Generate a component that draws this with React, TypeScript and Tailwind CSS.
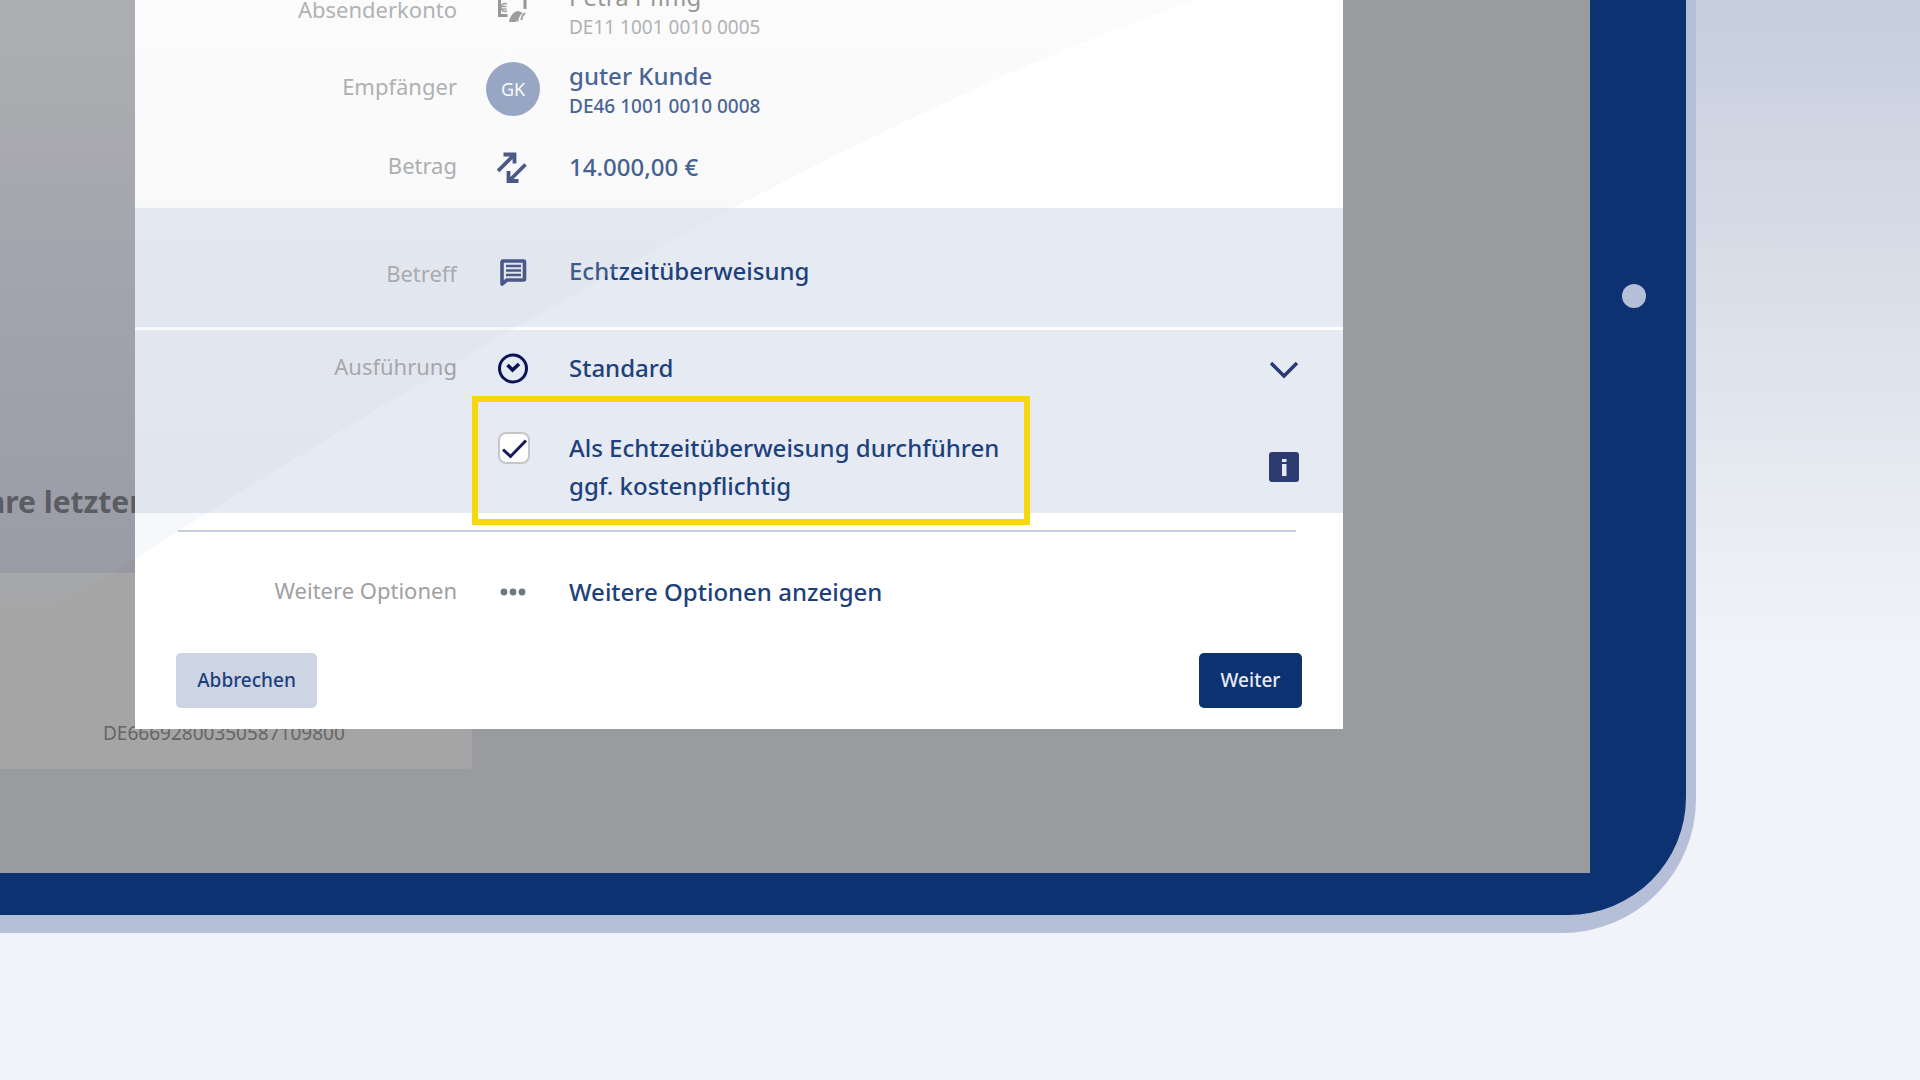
import React from "react";

const value = "text-2xl leading-8 font-medium text-[#1d417a]";

type RowProps = {
  name: string;
  htmlFor?: string;
  labelClass?: string;
  className?: string;
  icon: React.ReactNode;
  children: React.ReactNode;
  tail?: React.ReactNode;
};

function Row({ name, htmlFor, labelClass = "-mt-0.5 mb-0.5", className = "", icon, children, tail }: RowProps) {
  const text = `w-[294px] shrink-0 text-right text-[22px] leading-8 text-[#a0a0a2] ${labelClass}`;
  return (
    <div className={`flex items-center ${className}`}>
      {htmlFor ? (
        <label htmlFor={htmlFor} className={text}>
          {name}
        </label>
      ) : (
        <div className={text}>{name}</div>
      )}
      <div className="mx-7 flex w-14 shrink-0 items-center justify-center">{icon}</div>
      <div className="min-w-0 grow">{children}</div>
      {tail}
    </div>
  );
}

function AccountIcon() {
  return (
    <svg className="mb-3" width="32" height="36" viewBox="0 0 32 36" fill="none" aria-hidden="true">
      <path d="M10.500 28.500H2.500V2H28V22" stroke="#7c7c7c" strokeWidth="3" />
      <path d="M10 17a4 4 0 1 0 0 7M4.500 19.500h5M4.500 22h5" stroke="#8a8a8a" strokeWidth="1.600" />
      <path d="M12 35c1-6 4-10 9-11l3 1-5 10z" fill="#858585" />
      <path d="M20.500 34.500c0-4 1.500-7 4.500-9M24.500 33c0-3 1-5 3.500-7" stroke="#8a8a8a" strokeWidth="2" />
    </svg>
  );
}

function TransferIcon() {
  return (
    <svg width="32" height="32" viewBox="0 0 32 32" fill="none" stroke="#26376f" strokeWidth="3.800" aria-hidden="true">
      <path d="M1 20L17 4M6.500 3.500H17.500V12.500" />
      <path d="M28.500 13.500L12.500 29.500M11.500 20V30H21.500" />
    </svg>
  );
}

function MessageIcon() {
  return (
    <svg className="mt-0.5" width="28" height="30" viewBox="0 0 28 30" fill="none" aria-hidden="true">
      <path d="M3.500 4H24.500a1 1 0 0 1 1 1V22a1 1 0 0 1-1 1H8L3 27V5z" stroke="#2c3c74" strokeWidth="3.600" strokeLinejoin="round" />
      <path d="M7 9H22M7 13.500H22M7 18H22" stroke="#2c3c74" strokeWidth="2.400" />
    </svg>
  );
}

function ClockIcon() {
  return (
    <svg width="32" height="32" viewBox="0 0 32 32" fill="none" stroke="#0b1355" aria-hidden="true">
      <circle cx="16" cy="16.500" r="13.500" strokeWidth="3" />
      <path d="M10.500 13L15.500 18L22 12" strokeWidth="3.600" />
    </svg>
  );
}

function DotsIcon() {
  return (
    <svg width="28" height="10" viewBox="0 0 28 10" fill="#6c7787" aria-hidden="true">
      <circle cx="5" cy="5" r="3.400" />
      <circle cx="14" cy="5" r="3.400" />
      <circle cx="23" cy="5" r="3.400" />
    </svg>
  );
}

function Glare() {
  return (
    <svg className="pointer-events-none absolute top-0 left-0" width="1200" height="650" viewBox="0 0 1200 650" aria-hidden="true">
      <defs>
        <linearGradient id="glare" x1="0" y1="0" x2="0" y2="1">
          <stop offset="0" stopColor="rgb(238,239,242)" stopOpacity="0.23" />
          <stop offset="0.25" stopColor="rgb(226,228,232)" stopOpacity="0.2" />
          <stop offset="0.45" stopColor="rgb(208,216,222)" stopOpacity="0.18" />
          <stop offset="0.86" stopColor="rgb(178,192,214)" stopOpacity="0.11" />
          <stop offset="1" stopColor="rgb(178,192,214)" stopOpacity="0" />
        </linearGradient>
      </defs>
      <path d="M0 0H1195Q757 153 0 645z" fill="url(#glare)" />
    </svg>
  );
}

export default function App() {
  return (
    <div className="min-h-screen overflow-hidden bg-[#f1f3f8] bg-[linear-gradient(to_bottom,#c5cedb_0px,#ced4e1_110px,#dae0e9_300px,#f1f3f8_650px)] font-['Noto_Sans','Open_Sans',sans-serif]">
      <div className="mr-[224px] rounded-br-[134px] bg-[#b5bfd8] pr-[10px] pb-[18px]">
        <div className="flex rounded-br-[118px] bg-[#0c3272] pb-[42px]">
          <main className="relative grow overflow-hidden bg-[#9a9b9f] bg-[linear-gradient(to_bottom,#9a9b9f_100px,#9898a3_300px,#9898a2_572px)] bg-[length:135px_572px] bg-no-repeat pr-[247px] pb-36 pl-[135px]">
            <div className="absolute bottom-[104px] left-0 h-[196px] w-[472px] rounded-br-sm bg-[#a5a5a5]">
              <p className="absolute bottom-5 left-[103px] text-[19px] leading-8 text-[#666666]">DE66692800350587109800</p>
            </div>
            <h2 className="absolute bottom-[351px] left-[-26px] text-3xl leading-10 font-bold whitespace-nowrap text-[#4d4e50]">Ihre letzten</h2>

            <form className="relative -mt-[19px] bg-white" onSubmit={(e) => e.preventDefault()}>
              <section className="pb-[25px] pl-7">
                <Row name="Absenderkonto" icon={<AccountIcon />}>
                  <p className="text-2xl leading-8 text-[#7c7c7c]">Petra Pfiffig</p>
                  <p className="text-[19px] leading-7 text-[#a0a0a2]">DE11 1001 0010 0005</p>
                </Row>
                <Row
                  name="Empfänger"
                  className="mt-[19px]"
                  labelClass="pb-2"
                  icon={<span className="mb-0.5 flex size-[54px] items-center justify-center rounded-full bg-[#8195b8] text-lg text-white">GK</span>}
                >
                  <p className={value}>guter Kunde</p>
                  <p className="text-[19px] leading-7 font-medium text-[#1d417a]">DE46 1001 0010 0008</p>
                </Row>
                <Row name="Betrag" className="mt-[31px]" icon={<TransferIcon />}>
                  <p className={value}>14.000,00 €</p>
                </Row>
              </section>

              <section className="bg-[#e6eaf3] pt-[47px] pb-10 pl-7">
                <Row name="Betreff" htmlFor="betreff" labelClass="mt-0.5 -mb-0.5" icon={<MessageIcon />}>
                  <input id="betreff" type="text" defaultValue="Echtzeitüberweisung" className={`block h-8 w-full bg-transparent outline-none ${value}`} />
                </Row>
              </section>

              <section className="mt-[3px] bg-[#e6eaf3] pt-[22px] pr-11 pl-7">
                <Row
                  name="Ausführung"
                  htmlFor="ausfuehrung"
                  icon={<ClockIcon />}
                  tail={
                    <svg className="pointer-events-none mt-1 -ml-[30px]" width="30" height="20" viewBox="0 0 30 20" fill="none" stroke="#2a3b71" strokeWidth="3.400" aria-hidden="true">
                      <path d="M2 3L15 16L28 3" />
                    </svg>
                  }
                >
                  <select id="ausfuehrung" className={`block h-8 w-full appearance-none bg-transparent p-0 outline-none ${value}`}>
                    <option>Standard</option>
                  </select>
                </Row>
                <div className="mt-3 flex items-center justify-between">
                  <div className="relative -mb-3 ml-[309px] w-[558px] border-[6px] border-[#f8d70c] pt-[27px] pb-[14px]">
                    <label className="flex items-start">
                      <span className="mr-[39px] ml-5 flex h-[38px] shrink-0 items-center">
                        <span className="relative flex size-8">
                          <input type="checkbox" defaultChecked className="size-8 appearance-none rounded-lg border-2 border-[#c6c6c8] bg-white" />
                          <svg className="pointer-events-none absolute inset-0" width="32" height="32" viewBox="0 0 32 32" fill="none" stroke="#161a56" strokeWidth="3" aria-hidden="true">
                            <path d="M5 17.500L12.500 24.500L28 8.500" />
                          </svg>
                        </span>
                      </span>
                      <span className="text-2xl leading-[38px] font-medium text-[#1d417a]">
                        Als Echtzeitüberweisung durchführen
                        <br />
                        ggf. kostenpflichtig
                      </span>
                    </label>
                  </div>
                  <button type="button" aria-label="Information zur Echtzeitüberweisung" className="mt-6">
                    <svg width="30" height="30" viewBox="0 0 30 30" aria-hidden="true">
                      <rect width="30" height="30" rx="3" fill="#2d3c70" />
                      <path d="M13 7h4.500v3H13zM13 12h4.500v12H13z" fill="#e6e9f3" />
                    </svg>
                  </button>
                </div>
              </section>

              <section className="pb-[21px]">
                <hr className="mt-[17px] mr-[47px] ml-[43px] border-t-2 border-[#c6cfdf]" />
                <Row name="Weitere Optionen" className="mt-11 pl-7" icon={<DotsIcon />}>
                  <button type="button" className={`block ${value}`}>
                    Weitere Optionen anzeigen
                  </button>
                </Row>
                <div className="mt-[45px] flex justify-between px-[41px]">
                  <button type="button" className="h-[55px] w-[141px] rounded-[5px] bg-[#cdd5e4] text-[19px] font-medium text-[#1d417a]">
                    Abbrechen
                  </button>
                  <button type="submit" className="h-[55px] w-[103px] rounded-[5px] bg-[#0c3272] text-[19px] font-medium text-[#e8ecf5]">
                    Weiter
                  </button>
                </div>
              </section>
            </form>
            <Glare />
          </main>
          <div className="flex w-24 shrink-0 justify-center pt-[284px]">
            <span className="mr-2 size-6 rounded-full bg-[#b5bfd8]" />
          </div>
        </div>
      </div>
    </div>
  );
}
